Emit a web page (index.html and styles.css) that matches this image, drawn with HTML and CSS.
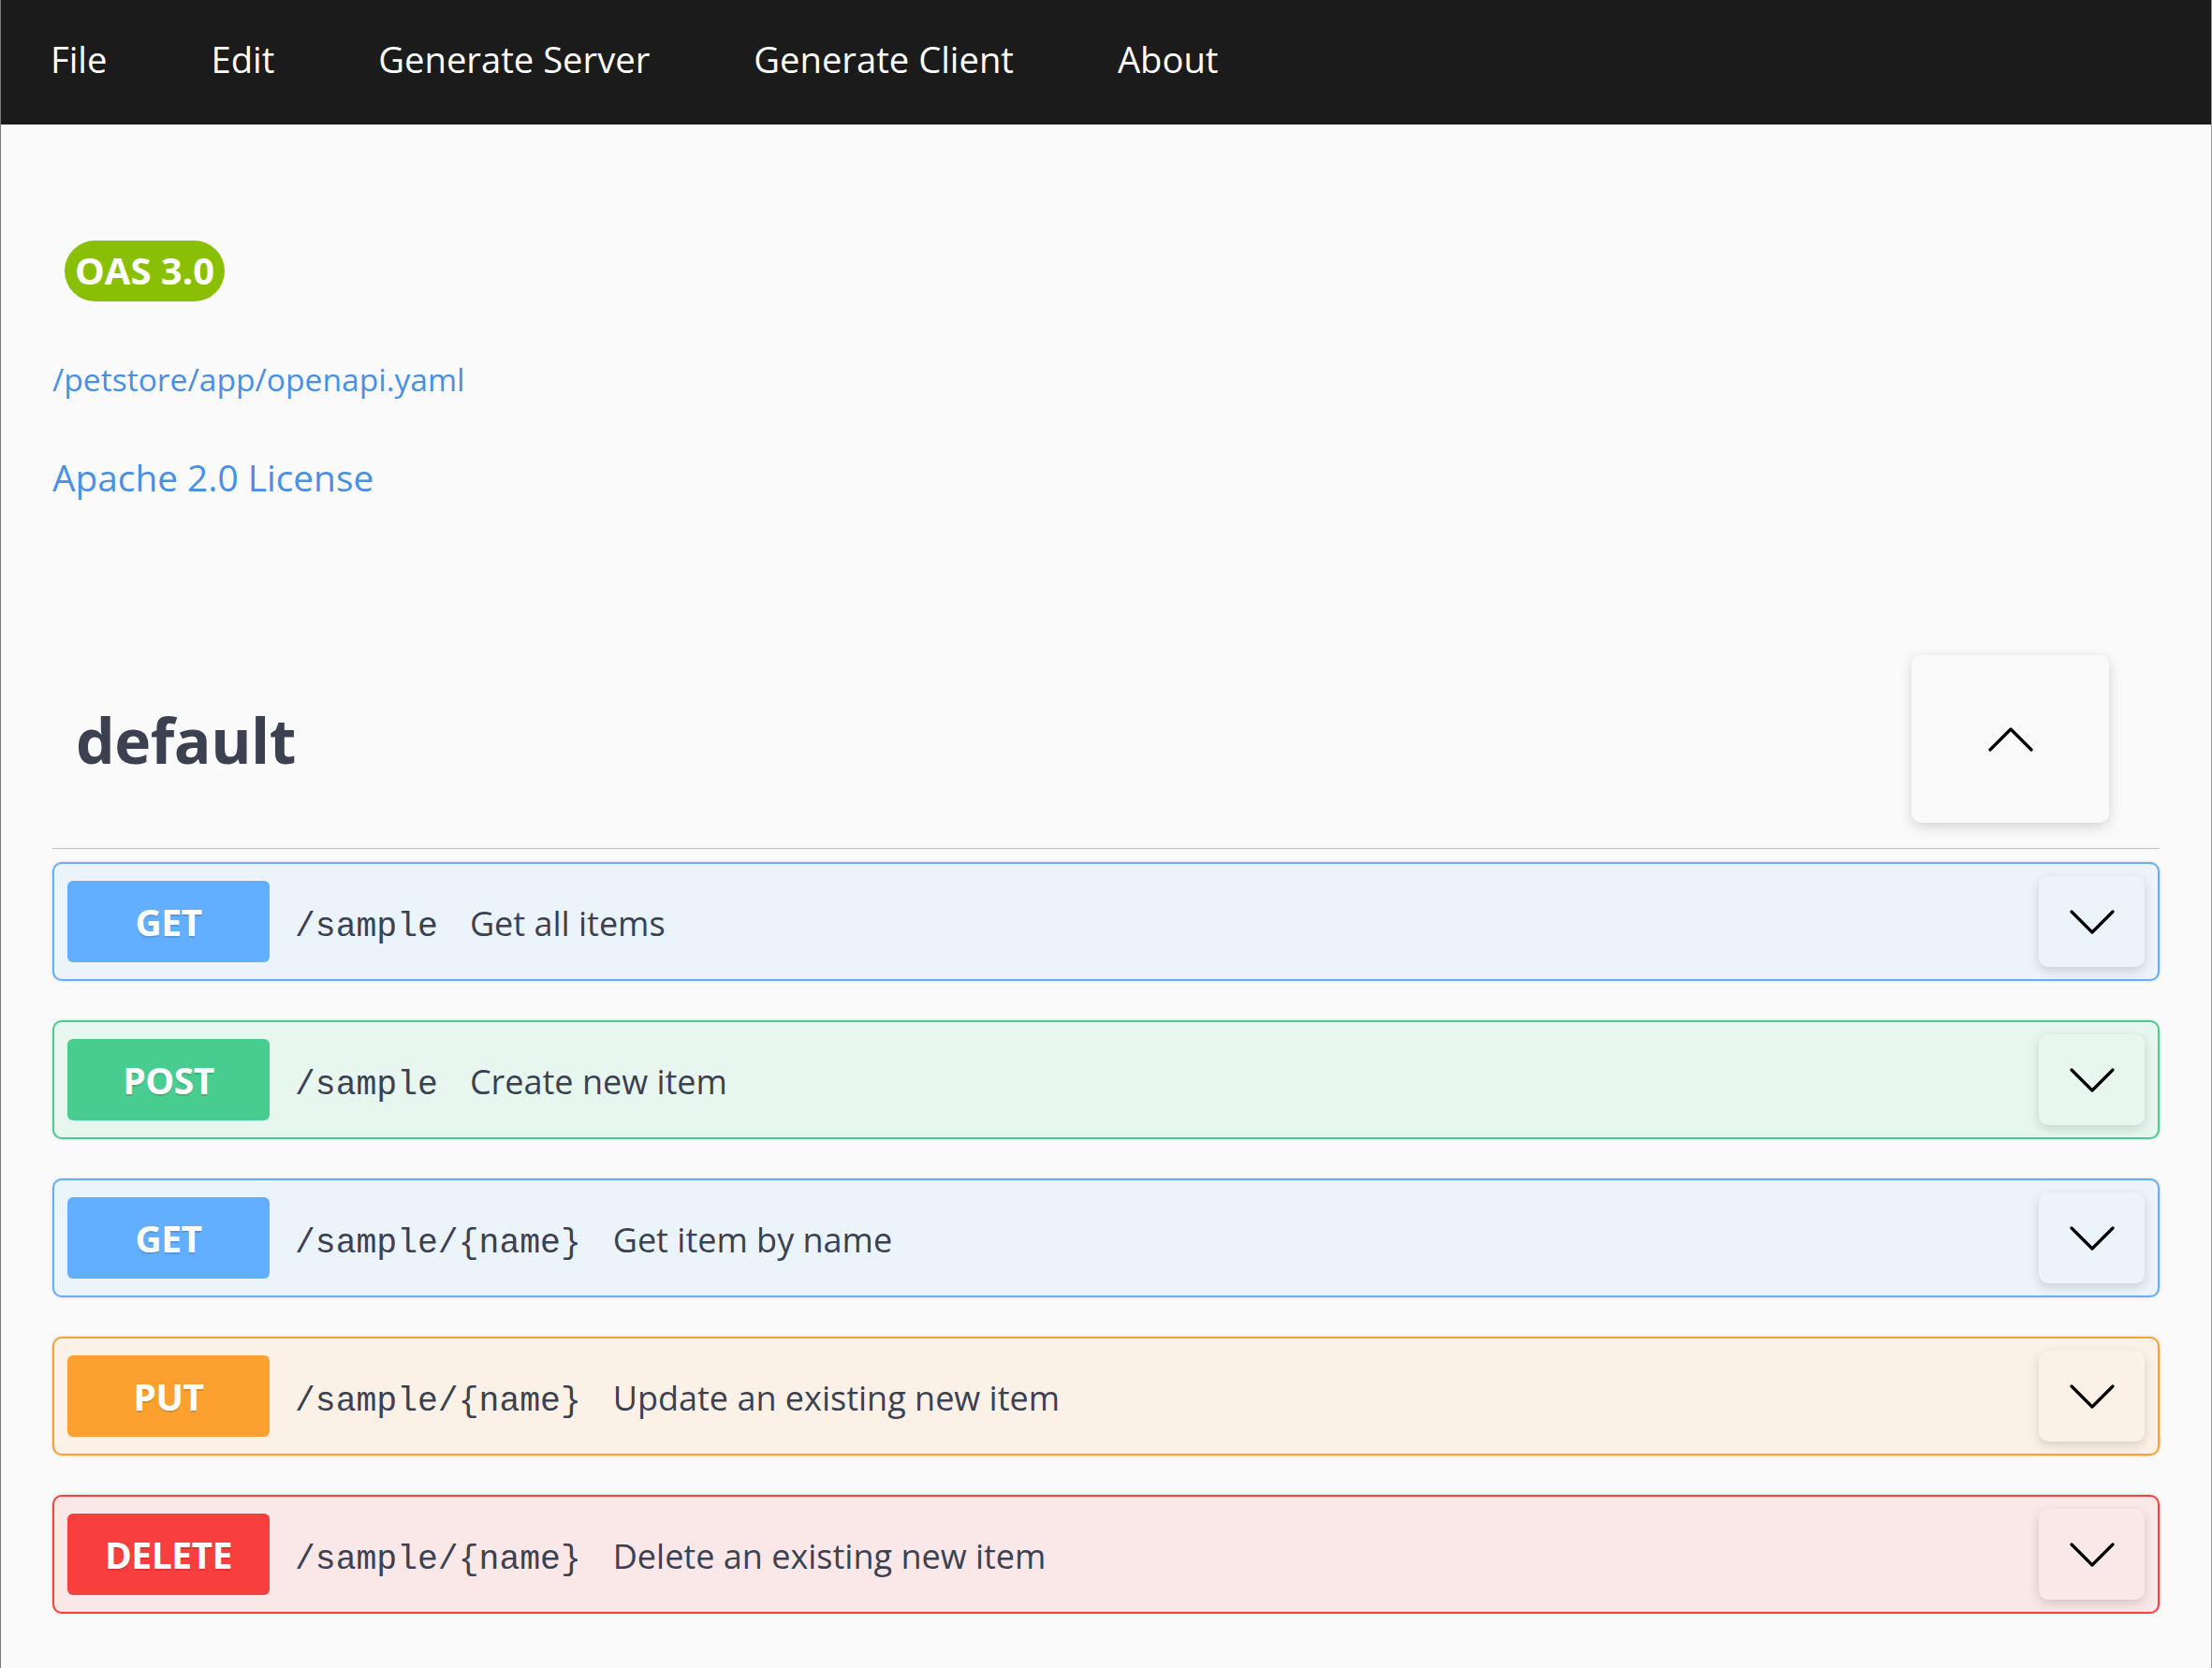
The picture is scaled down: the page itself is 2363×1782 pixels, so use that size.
FILE: index.html
```html
<!DOCTYPE html>
<html lang="en">
<head>
<meta charset="utf-8">
<title>Swagger Editor</title>
<link rel="stylesheet" href="styles.css">
</head>
<body>
<div class="page">
  <header class="topbar">
    <nav class="menu">
      <span class="menu-item">File</span>
      <span class="menu-item">Edit</span>
      <span class="menu-item">Generate Server</span>
      <span class="menu-item">Generate Client</span>
      <span class="menu-item">About</span>
    </nav>
  </header>
  <main class="content">
    <section class="info">
      <div class="badge-row"><span class="oas-badge">OAS 3.0</span></div>
      <a class="spec-link" href="#">/petstore/app/openapi.yaml</a>
      <a class="license-link" href="#">Apache 2.0 License</a>
    </section>
    <section class="tag-section">
      <div class="tag-header">
        <h3 class="tag-title">default</h3>
        <button class="collapse-btn" type="button" aria-label="Collapse">
          <svg width="48" height="28" viewBox="0 0 48 28"><polyline points="2,25 24,3 46,25" fill="none" stroke="#000" stroke-width="3.2" stroke-linecap="round" stroke-linejoin="round"/></svg>
        </button>
      </div>
      <div class="ops">
        <div class="op op-get">
          <span class="method">GET</span>
          <span class="summary"><span class="path">/sample</span><span class="desc">Get all items</span></span>
          <button class="expand-btn" type="button" aria-label="Expand"><svg width="48" height="28" viewBox="0 0 48 28"><polyline points="2,3 24,25 46,3" fill="none" stroke="#000" stroke-width="3.2" stroke-linecap="round" stroke-linejoin="round"/></svg></button>
        </div>
        <div class="op op-post">
          <span class="method">POST</span>
          <span class="summary"><span class="path">/sample</span><span class="desc">Create new item</span></span>
          <button class="expand-btn" type="button" aria-label="Expand"><svg width="48" height="28" viewBox="0 0 48 28"><polyline points="2,3 24,25 46,3" fill="none" stroke="#000" stroke-width="3.2" stroke-linecap="round" stroke-linejoin="round"/></svg></button>
        </div>
        <div class="op op-get">
          <span class="method">GET</span>
          <span class="summary"><span class="path">/sample/{name}</span><span class="desc">Get item by name</span></span>
          <button class="expand-btn" type="button" aria-label="Expand"><svg width="48" height="28" viewBox="0 0 48 28"><polyline points="2,3 24,25 46,3" fill="none" stroke="#000" stroke-width="3.2" stroke-linecap="round" stroke-linejoin="round"/></svg></button>
        </div>
        <div class="op op-put">
          <span class="method">PUT</span>
          <span class="summary"><span class="path">/sample/{name}</span><span class="desc">Update an existing new item</span></span>
          <button class="expand-btn" type="button" aria-label="Expand"><svg width="48" height="28" viewBox="0 0 48 28"><polyline points="2,3 24,25 46,3" fill="none" stroke="#000" stroke-width="3.2" stroke-linecap="round" stroke-linejoin="round"/></svg></button>
        </div>
        <div class="op op-delete">
          <span class="method">DELETE</span>
          <span class="summary"><span class="path">/sample/{name}</span><span class="desc">Delete an existing new item</span></span>
          <button class="expand-btn" type="button" aria-label="Expand"><svg width="48" height="28" viewBox="0 0 48 28"><polyline points="2,3 24,25 46,3" fill="none" stroke="#000" stroke-width="3.2" stroke-linecap="round" stroke-linejoin="round"/></svg></button>
        </div>
      </div>
    </section>
  </main>
</div>
</body>
</html>
```
FILE: styles.css
```css
* { box-sizing: border-box; }
html, body { margin: 0; padding: 0; background: #fafafa; }
body { font-family: "Open Sans", "Noto Sans", sans-serif; color: #3b4151; }

.page {
  min-height: 100vh;
  border-left: 1px solid #7a7a7a;
  border-right: 1px solid #9a9a9a;
  background: #fafafa;
}

.topbar {
  height: 133px;
  background: #1b1b1b;
  display: flex;
  align-items: center;
  padding: 0 0 8px 53px;
}
.menu { display: flex; gap: 111px; }
.menu-item {
  color: #fff;
  font-size: 38.2px;
  line-height: 52px;
  white-space: nowrap;
}

.content { padding: 0 55px; }

.info { display: flex; flex-direction: column; align-items: flex-start; }
.badge-row { margin-top: 124px; padding-left: 13px; }
.oas-badge {
  display: inline-flex;
  align-items: center;
  height: 65px;
  padding: 0 11px 2px 11px;
  border-radius: 33px;
  background: #89bf04;
  color: #fff;
  font-weight: 700;
  font-size: 40px;
}
.spec-link {
  margin-top: 61px;
  color: #4990e2;
  text-decoration: none;
  font-size: 33.6px;
  line-height: 45px;
}
.license-link {
  margin-top: 56px;
  color: #4990e2;
  text-decoration: none;
  font-size: 38.8px;
  line-height: 52px;
}

.tag-section { margin-top: 164px; }
.tag-header {
  display: flex;
  align-items: center;
  justify-content: space-between;
  padding: 0 54px 27px 25px;
  border-bottom: 1px solid rgba(59, 65, 81, 0.3);
}
.tag-title {
  margin: 0;
  font-size: 66px;
  font-weight: 700;
  color: #3b4151;
  letter-spacing: -0.5px;
}
.collapse-btn {
  width: 211px;
  height: 179px;
  border: none;
  border-radius: 10px;
  background: #fafafa;
  box-shadow: 0 4px 14px rgba(0, 0, 0, 0.16);
  display: flex;
  align-items: center;
  justify-content: center;
  padding: 0;
}

.ops { padding-top: 14px; }
.op {
  display: flex;
  align-items: center;
  height: 127px;
  margin-bottom: 42px;
  padding: 0 14px;
  border: 2px solid;
  border-radius: 10px;
  box-shadow: 0 0 3px rgba(0, 0, 0, 0.19);
}
.op-get { border-color: #61affe; background: #ebf3fb; }
.op-post { border-color: #49cc90; background: #e8f6f0; }
.op-put { border-color: #fca130; background: #fbf1e6; }
.op-delete { border-color: #f93e3e; background: #fae7e7; }

.method {
  flex: none;
  width: 216px;
  height: 87px;
  border-radius: 6px;
  display: flex;
  align-items: center;
  justify-content: center;
  color: #fff;
  font-weight: 700;
  font-size: 39px;
  letter-spacing: -0.5px;
  text-shadow: 0 2px 0 rgba(0, 0, 0, 0.12);
}
.op-get .method { background: #61affe; }
.op-post .method { background: #49cc90; }
.op-put .method { background: #fca130; }
.op-delete .method { background: #f93e3e; }

.summary {
  flex: 1;
  display: flex;
  align-items: baseline;
  padding-top: 3px;
}
.path {
  margin-left: 27px;
  font-family: "Liberation Mono", "DejaVu Sans Mono", monospace;
  font-size: 36.4px;
  color: #3b4151;
  white-space: nowrap;
}
.desc {
  margin-left: 34px;
  font-size: 36px;
  color: #3b4151;
  white-space: nowrap;
}
.expand-btn {
  flex: none;
  width: 113px;
  height: 97px;
  border: none;
  border-radius: 10px;
  background: transparent;
  box-shadow: 0 4px 12px rgba(0, 0, 0, 0.15);
  display: flex;
  align-items: center;
  justify-content: center;
  padding: 0;
}
```
